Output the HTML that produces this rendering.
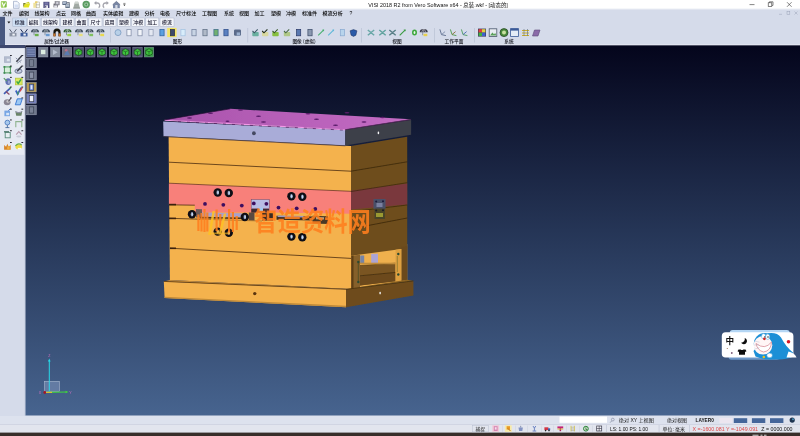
<!DOCTYPE html><html lang="zh"><head><meta charset="utf-8"><title>VISI 2018 R2 from Vero Software x64 - 总装.wkf - [动态的]</title>
<style>html,body{margin:0;padding:0;background:#d5dbea;overflow:hidden}body{width:800px;height:436px;position:relative;font-family:"Liberation Sans", "Noto Sans CJK SC", sans-serif}svg{position:absolute;left:-6px;top:-6px;display:block;filter:blur(0.3px)}text{font-family:"Liberation Sans", "Noto Sans CJK SC", sans-serif}</style></head><body>
<svg width="812" height="448" viewBox="-6 -6 812 448">
<defs>
<linearGradient id="bg" x1="0" y1="0" x2="0" y2="1"><stop offset="0" stop-color="#04051c"/><stop offset="0.5" stop-color="#253556"/><stop offset="1" stop-color="#47648f"/></linearGradient>
<filter id="b1" x="-20%" y="-20%" width="140%" height="140%"><feGaussianBlur stdDeviation="0.45"/></filter>
<filter id="b2" x="-20%" y="-20%" width="140%" height="140%"><feGaussianBlur stdDeviation="0.3"/></filter>
<linearGradient id="mag" x1="0" y1="0" x2="1" y2="0"><stop offset="0" stop-color="#a953ac"/><stop offset="1" stop-color="#c46cc4"/></linearGradient></defs>
<rect x="-6" y="-6" width="812" height="448" fill="#d5dbea"/>
<rect x="-6" y="-6" width="812" height="14.8" fill="#ffffff"/>
<rect x="-6" y="8.8" width="812" height="0.600" fill="#f1f3f9"/><rect x="-6" y="9.400" width="812" height="0.600" fill="#e2e6f1"/>
<rect x="25.2" y="45.3" width="780.8" height="370.4" fill="url(#bg)"/>
<rect x="-6" y="16.8" width="11" height="31.500" fill="#485880"/>
<rect x="5" y="44.300" width="801" height="0.800" fill="#e6e9f3"/>
<rect x="-6" y="415.7" width="812" height="17" fill="#dde2ee"/>
<rect x="-6" y="424" width="812" height="0.7" fill="#c2c8d8"/>
<rect x="-6" y="424.7" width="812" height="8" fill="#e2e5ee"/>
<rect x="-6" y="432.6" width="812" height="9.4" fill="#382e2a"/>
<text x="368.3" y="6.7" font-size="5.60" fill="#111" text-anchor="start" font-weight="normal" textLength="139.5" lengthAdjust="spacingAndGlyphs">VISI 2018 R2 from Vero Software x64 - 总装.wkf - [动态的]</text>
<path d="M749.5 4.6h5" stroke="#333" stroke-width="0.6" fill="none"/>
<rect x="768.2" y="2.8" width="3.6" height="3.6" stroke="#333" stroke-width="0.6" fill="none"/><path d="M769.4 2.8v-1h3.6v3.6h-1" stroke="#333" stroke-width="0.6" fill="none"/>
<path d="M787 2.2l4.6 4.6M791.6 2.2l-4.6 4.6" stroke="#333" stroke-width="0.6" fill="none"/>
<g stroke="#9aa2b8" stroke-width="0.5" fill="none"><path d="M779 14.3h3"/><rect x="787" y="11.5" width="2.8" height="2.8"/><path d="M794.5 11.5l3 3M797.5 11.5l-3 3"/></g>
<g filter="url(#b1)">
<rect x="0.9" y="1.2" width="5.8" height="6.3" rx="0.8" fill="#7cba3c"/><rect x="0.9" y="1.2" width="2.6" height="6.3" rx="0.8" fill="#a4d264"/><path d="M2.1 2.6l1.700 3.600 1.700-3.600" stroke="#fff" stroke-width="1.100" fill="none"/>
<path d="M13.500 1.300h3.600l2 2v5h-5.600z" fill="#f4f7fd" stroke="#8a98b8" stroke-width="0.600"/><path d="M14.600 4.500h3.400v3h-3.400z" fill="#d4def2"/>
<path d="M23.300 7.600l1.500-4h5.400l-1.500 4z" fill="#e2e224"/><path d="M23.300 7.600v-4.600h2l0.600 0.800h-1.100z" fill="#70781e"/><path d="M25.300 3l3.500-1.200 1 1.800" fill="#c8d030"/>
<rect x="33.300" y="2.800" width="3.400" height="5" fill="#f0e29a"/><rect x="36.200" y="2" width="3.400" height="5.800" fill="#fbfbf6" stroke="#a8a48c" stroke-width="0.500"/><rect x="35" y="1.300" width="2.400" height="1.800" fill="#e8d070"/><path d="M36.200 4.800h3.400" stroke="#8a8a7a" stroke-width="0.500"/>
<rect x="43.400" y="1.800" width="6" height="6.200" fill="#4c4c7e"/><rect x="44.500" y="2.300" width="3.800" height="2.400" fill="#7878a8"/><rect x="44.800" y="5.300" width="3.200" height="2.700" fill="#ececf4"/><rect x="45.200" y="5.800" width="1" height="1.800" fill="#3c3c60"/>
<rect x="53.500" y="3.600" width="4.400" height="3.800" fill="#74747e"/><rect x="55" y="1.600" width="4.200" height="3.400" fill="#9c9ca6" stroke="#5a5a64" stroke-width="0.400"/><rect x="54.200" y="5.400" width="3" height="2.400" fill="#e8e8ee"/><rect x="56.200" y="2.300" width="2" height="1.400" fill="#e0e0e8"/>
<rect x="62.400" y="1.400" width="4.600" height="3.600" fill="#52607a"/><rect x="63" y="1.900" width="3.400" height="2.200" fill="#aab8cc"/><rect x="65.400" y="3.600" width="4.400" height="4.400" fill="#667488"/><rect x="66" y="4.300" width="3" height="2.400" fill="#b4c0d0"/><path d="M67 2.600h2.400v1" stroke="#3a4454" stroke-width="0.700" fill="none"/>
<path d="M73.200 8.200l1.800-6.400h3.200l1.800 6.400z" fill="#a2aaa4"/><path d="M75.200 1.800h2.800l0.500 2h-3.800z" fill="#d0d6d0"/><path d="M73.200 8.200h6.800" stroke="#6a726c" stroke-width="0.600"/>
<circle cx="86.200" cy="4.500" r="3.700" fill="#5c9c62"/><circle cx="86.200" cy="4.500" r="2" fill="#9cc8a0"/><circle cx="86.200" cy="4.500" r="0.900" fill="#4a8a50"/>
<path d="M98.600 7.600a2.500 2.500 0 0 0 -1.300-4.600h-1.600" fill="none" stroke="#a2a2aa" stroke-width="1.300"/><path d="M96.300 1l-2.300 2 2.300 2z" fill="#a2a2aa"/>
<path d="M104.200 7.600a2.500 2.500 0 0 1 1.300-4.600h1.600" fill="none" stroke="#a2a2aa" stroke-width="1.300"/><path d="M106.500 1l2.300 2-2.300 2z" fill="#a2a2aa"/>
<path d="M113 4.600l3.400-3 3.400 3v3.600h-6.800z" fill="#7886a4"/><rect x="115.300" y="5" width="2.200" height="3.200" fill="#d4dae6"/><path d="M112.600 4.800l3.800-3.400 3.800 3.400" stroke="#55607c" stroke-width="0.700" fill="none"/>
</g>
<path d="M123.300 3.400h2.200" stroke="#222" stroke-width="0.500"/><path d="M123.200 4.500h2.400l-1.200 1.400z" fill="#222"/>
<text x="2.5" y="15.2" font-size="5.05" fill="#000" text-anchor="start" font-weight="500" >文件</text>
<text x="19.0" y="15.2" font-size="5.05" fill="#000" text-anchor="start" font-weight="500" >编辑</text>
<text x="34.5" y="15.2" font-size="5.05" fill="#000" text-anchor="start" font-weight="500" >线架构</text>
<text x="56.0" y="15.2" font-size="5.05" fill="#000" text-anchor="start" font-weight="500" >点云</text>
<text x="71.0" y="15.2" font-size="5.05" fill="#000" text-anchor="start" font-weight="500" >网格</text>
<text x="86.0" y="15.2" font-size="5.05" fill="#000" text-anchor="start" font-weight="500" >曲面</text>
<text x="103.0" y="15.2" font-size="5.05" fill="#000" text-anchor="start" font-weight="500" >实体编辑</text>
<text x="129.0" y="15.2" font-size="5.05" fill="#000" text-anchor="start" font-weight="500" >建模</text>
<text x="144.5" y="15.2" font-size="5.05" fill="#000" text-anchor="start" font-weight="500" >分析</text>
<text x="160.0" y="15.2" font-size="5.05" fill="#000" text-anchor="start" font-weight="500" >电极</text>
<text x="176.0" y="15.2" font-size="5.05" fill="#000" text-anchor="start" font-weight="500" >尺寸标注</text>
<text x="202.0" y="15.2" font-size="5.05" fill="#000" text-anchor="start" font-weight="500" >工程图</text>
<text x="224.0" y="15.2" font-size="5.05" fill="#000" text-anchor="start" font-weight="500" >系统</text>
<text x="239.0" y="15.2" font-size="5.05" fill="#000" text-anchor="start" font-weight="500" >视图</text>
<text x="254.5" y="15.2" font-size="5.05" fill="#000" text-anchor="start" font-weight="500" >加工</text>
<text x="271.0" y="15.2" font-size="5.05" fill="#000" text-anchor="start" font-weight="500" >塑模</text>
<text x="286.0" y="15.2" font-size="5.05" fill="#000" text-anchor="start" font-weight="500" >冲模</text>
<text x="302.0" y="15.2" font-size="5.05" fill="#000" text-anchor="start" font-weight="500" >标准件</text>
<text x="322.5" y="15.2" font-size="5.05" fill="#000" text-anchor="start" font-weight="500" >模流分析</text>
<text x="349.5" y="15.2" font-size="5.05" fill="#000" text-anchor="start" font-weight="500" >?</text>
<path d="M7.4 21.6h3l-1.500 2z" fill="#111"/>
<rect x="12.8" y="18" width="13.8" height="8.4" fill="#cfe0f5" stroke="#aab3c8" stroke-width="0.5"/>
<text x="19.7" y="23.9" font-size="4.90" fill="#14142a" text-anchor="middle" font-weight="500" >标准</text>
<rect x="27.3" y="18" width="12.7" height="8.4" fill="#f4f6fb" stroke="#aab3c8" stroke-width="0.5"/>
<text x="33.6" y="23.9" font-size="4.90" fill="#14142a" text-anchor="middle" font-weight="500" >编辑</text>
<rect x="41.3" y="18" width="18.2" height="8.4" fill="#f4f6fb" stroke="#aab3c8" stroke-width="0.5"/>
<text x="50.4" y="23.9" font-size="4.90" fill="#14142a" text-anchor="middle" font-weight="500" >线架构</text>
<rect x="60.8" y="18" width="13.2" height="8.4" fill="#f4f6fb" stroke="#aab3c8" stroke-width="0.5"/>
<text x="67.4" y="23.9" font-size="4.90" fill="#14142a" text-anchor="middle" font-weight="500" >建模</text>
<rect x="75.2" y="18" width="12.4" height="8.4" fill="#f4f6fb" stroke="#aab3c8" stroke-width="0.5"/>
<text x="81.4" y="23.9" font-size="4.90" fill="#14142a" text-anchor="middle" font-weight="500" >曲面</text>
<rect x="88.8" y="18" width="13.2" height="8.4" fill="#f4f6fb" stroke="#aab3c8" stroke-width="0.5"/>
<text x="95.4" y="23.9" font-size="4.90" fill="#14142a" text-anchor="middle" font-weight="500" >尺寸</text>
<rect x="103.2" y="18" width="12.8" height="8.4" fill="#f4f6fb" stroke="#aab3c8" stroke-width="0.5"/>
<text x="109.6" y="23.9" font-size="4.90" fill="#14142a" text-anchor="middle" font-weight="500" >应用</text>
<rect x="117.4" y="18" width="13.1" height="8.4" fill="#f4f6fb" stroke="#aab3c8" stroke-width="0.5"/>
<text x="124.0" y="23.9" font-size="4.90" fill="#14142a" text-anchor="middle" font-weight="500" >塑模</text>
<rect x="131.8" y="18" width="12.8" height="8.4" fill="#f4f6fb" stroke="#aab3c8" stroke-width="0.5"/>
<text x="138.2" y="23.9" font-size="4.90" fill="#14142a" text-anchor="middle" font-weight="500" >冲模</text>
<rect x="145.8" y="18" width="13.0" height="8.4" fill="#f4f6fb" stroke="#aab3c8" stroke-width="0.5"/>
<text x="152.3" y="23.9" font-size="4.90" fill="#14142a" text-anchor="middle" font-weight="500" >加工</text>
<rect x="160.0" y="18" width="14.0" height="8.4" fill="#f4f6fb" stroke="#aab3c8" stroke-width="0.5"/>
<text x="167.0" y="23.9" font-size="4.90" fill="#14142a" text-anchor="middle" font-weight="500" >模流</text>
<text x="56.5" y="43.2" font-size="4.70" fill="#101018" text-anchor="middle" font-weight="500" >属性/过滤器</text>
<text x="177.5" y="43.2" font-size="4.70" fill="#101018" text-anchor="middle" font-weight="500" >图形</text>
<text x="304.0" y="43.2" font-size="4.70" fill="#101018" text-anchor="middle" font-weight="500" >图像 (虚拟)</text>
<text x="397.0" y="43.2" font-size="4.70" fill="#101018" text-anchor="middle" font-weight="500" >视图</text>
<text x="454.0" y="43.2" font-size="4.70" fill="#101018" text-anchor="middle" font-weight="500" >工作平面</text>
<text x="509.0" y="43.2" font-size="4.70" fill="#101018" text-anchor="middle" font-weight="500" >系统</text>
<rect x="110.0" y="28" width="0.6" height="14.5" fill="#b4bccf"/>
<rect x="247.5" y="28" width="0.6" height="14.5" fill="#b4bccf"/>
<rect x="361.0" y="28" width="0.6" height="14.5" fill="#b4bccf"/>
<rect x="434.0" y="28" width="0.6" height="14.5" fill="#b4bccf"/>
<rect x="474.0" y="28" width="0.6" height="14.5" fill="#b4bccf"/>
<g filter="url(#b1)">
<rect x="9.5" y="32.8" width="7" height="3.600" fill="#8a92a4"/><path d="M9.6 29.2l2.600 3.600M16.4 29.2l-2.600 3.600" stroke="#5a6274" stroke-width="1"/><rect x="12.4" y="33.6" width="2.400" height="2" fill="#f0f3f8"/>
<rect x="20.5" y="32.8" width="7" height="3.600" fill="#3c5c9c"/><path d="M20.6 29.2l2.600 3.600M27.4 29.2l-2.600 3.600" stroke="#1c2c54" stroke-width="1"/><rect x="23.4" y="33.6" width="2.400" height="2" fill="#f0f3f8"/>
<path d="M31.0 32.2a4 3.2 0 0 1 8 0z" fill="#3a4a5a"/><path d="M33.0 32.0l1.300-2.600M35.0 32.1v-3M37.0 32.0l-1.300-2.600" stroke="#e8ecf2" stroke-width="0.500"/><path d="M34.0 32.2v3" stroke="#596474" stroke-width="0.600"/><rect x="34.8" y="33.8" width="3.800" height="2.400" fill="#6ab04a"/>
<path d="M42.0 32.2a4 3.2 0 0 1 8 0z" fill="#3a4a5a"/><path d="M44.0 32.0l1.300-2.600M46.0 32.1v-3M48.0 32.0l-1.300-2.600" stroke="#e8ecf2" stroke-width="0.500"/><path d="M45.0 32.2v3" stroke="#596474" stroke-width="0.600"/><rect x="45.8" y="33.8" width="3.800" height="2.400" fill="#6a9ad0"/>
<path d="M53.4 36.2v-4a3.600 3.600 0 0 1 7.200 0v4h-2.200v-3.600a1.400 1.400 0 0 0-2.800 0v3.600z" fill="#16120e"/><rect x="53.4" y="33.4" width="2" height="3" fill="#c87830"/><rect x="58.6" y="33.4" width="2" height="3" fill="#c87830"/>
<path d="M63.5 32.2a4 3.2 0 0 1 8 0z" fill="#2c5a2c"/><path d="M65.5 32.0l1.300-2.600M67.5 32.1v-3M69.5 32.0l-1.300-2.600" stroke="#e8ecf2" stroke-width="0.500"/><path d="M66.5 32.2v3" stroke="#596474" stroke-width="0.600"/><rect x="67.3" y="33.8" width="3.800" height="2.400" fill="#9ad040"/>
<path d="M75.0 32.2a4 3.2 0 0 1 8 0z" fill="#3a4a5a"/><path d="M77.0 32.0l1.300-2.600M79.0 32.1v-3M81.0 32.0l-1.300-2.600" stroke="#e8ecf2" stroke-width="0.500"/><path d="M78.0 32.2v3" stroke="#596474" stroke-width="0.600"/><rect x="78.8" y="33.8" width="3.800" height="2.400" fill="#e8e080"/>
<path d="M85.5 32.2a4 3.2 0 0 1 8 0z" fill="#3a4a5a"/><path d="M87.5 32.0l1.300-2.600M89.5 32.1v-3M91.5 32.0l-1.300-2.600" stroke="#e8ecf2" stroke-width="0.500"/><path d="M88.5 32.2v3" stroke="#596474" stroke-width="0.600"/><rect x="89.3" y="33.8" width="3.800" height="2.400" fill="#80c060"/>
<path d="M96.5 32.2a4 3.2 0 0 1 8 0z" fill="#3a4a5a"/><path d="M98.5 32.0l1.300-2.600M100.5 32.1v-3M102.5 32.0l-1.300-2.600" stroke="#e8ecf2" stroke-width="0.500"/><path d="M99.5 32.2v3" stroke="#596474" stroke-width="0.600"/><rect x="100.3" y="33.8" width="3.800" height="2.400" fill="#e8d850"/>
<rect x="167.2" y="27.9" width="9.4" height="9.2" fill="#f3e468"/>
<circle cx="118.0" cy="32.6" r="3" fill="#b8d0e8" stroke="#7a9ac0" stroke-width="0.8"/>
<rect x="126.9" y="29.4" width="4.2" height="6.4" fill="#f2f4fa" stroke="#7a86a0" stroke-width="0.7"/>
<rect x="137.9" y="29.4" width="4.2" height="6.4" fill="#f2f4fa" stroke="#7a86a0" stroke-width="0.7"/>
<rect x="148.9" y="29.4" width="4.2" height="6.4" fill="#e4e8f2" stroke="#8a96b0" stroke-width="0.7"/>
<rect x="159.9" y="29.4" width="4.2" height="6.4" fill="#5aa0e0" stroke="#2a5a98" stroke-width="0.7"/>
<rect x="170.4" y="29.4" width="4.2" height="6.4" fill="#3c4a6c" stroke="#2a3040" stroke-width="0.7"/>
<rect x="180.9" y="29.4" width="4.2" height="6.4" fill="#d8ecfa" stroke="#a0c0e0" stroke-width="0.7"/>
<rect x="191.9" y="29.4" width="4.2" height="6.4" fill="#c8d4e4" stroke="#6a7a98" stroke-width="0.7"/>
<rect x="202.9" y="29.4" width="4.2" height="6.4" fill="#b0bac8" stroke="#5a6a80" stroke-width="0.7"/>
<rect x="213.9" y="29.4" width="4.2" height="6.4" fill="#70b070" stroke="#3a6a8a" stroke-width="0.7"/>
<rect x="223.9" y="29.4" width="4.2" height="6.4" fill="#5a80c0" stroke="#2a4a88" stroke-width="0.7"/>
<rect x="234.0" y="29.4" width="7" height="6.4" rx="1.2" fill="#5a6a8a"/><rect x="236.7" y="32.4" width="3.400" height="3" fill="#9ab0d0"/>
<rect x="252.3" y="32.0" width="6.4" height="4.2" rx="0.8" fill="#6ab0a0"/><path d="M252.5 31.0l1.800 1.800 3.400-3.400" stroke="#3e5a68" stroke-width="1.100" fill="none"/>
<rect x="262.0" y="32.0" width="6.4" height="4.2" rx="0.8" fill="#d8d8a0"/><path d="M262.2 31.0l1.800 1.800 3.400-3.400" stroke="#1e2a1a" stroke-width="1.100" fill="none"/>
<rect x="272.3" y="32.0" width="6.4" height="4.2" rx="0.8" fill="#88c040"/><path d="M272.5 31.0l1.800 1.800 3.400-3.400" stroke="#3a5a2a" stroke-width="1.100" fill="none"/>
<rect x="283.8" y="32.0" width="6.4" height="4.2" rx="0.8" fill="#b0c888"/><path d="M284.0 31.0l1.800 1.800 3.400-3.400" stroke="#4a6a4a" stroke-width="1.100" fill="none"/>
<rect x="296.5" y="29.4" width="4.2" height="6.4" fill="#5a78b0" stroke="#2a3a68" stroke-width="0.7"/>
<rect x="307.9" y="29.4" width="4.2" height="6.4" fill="#8a98b0" stroke="#3a4a68" stroke-width="0.7"/>
<path d="M318.2 35.4l5.600-5.600" stroke="#4ab070" stroke-width="1.100"/><path d="M324.2 29.4l-2.200 0.400 1.800 1.800z" fill="#4ab070"/>
<path d="M328.2 35.4l5.600-5.600" stroke="#60b8d8" stroke-width="1.100"/><path d="M334.2 29.4l-2.200 0.400 1.800 1.800z" fill="#60b8d8"/>
<rect x="340.3" y="29.4" width="4.2" height="6.4" fill="#b8d4ec" stroke="#88a8d0" stroke-width="0.7"/>
<path d="M350.1 30.8l3.400-1.200 3.400 1.200-1 4.400-2.400 1.200-2.400-1.200z" fill="#2a5aa8" stroke="#1a2a58" stroke-width="0.5"/>
<path d="M367.8 30.0l3.2 2.6 3.2-2.600M367.8 35.2l3.2-2.600 3.2 2.600" stroke="#6aa8a8" stroke-width="1.400" fill="none"/>
<path d="M379.3 30.0l3.2 2.6 3.2-2.600M379.3 35.2l3.2-2.600 3.2 2.600" stroke="#62a4a0" stroke-width="1.400" fill="none"/>
<path d="M389.3 30.0l3.2 2.6 3.2-2.600M389.3 35.2l3.2-2.600 3.2 2.600" stroke="#5a8088" stroke-width="1.400" fill="none"/>
<path d="M399.7 35.4l5.600-5.600" stroke="#3a9a40" stroke-width="1.100"/><path d="M405.7 29.4l-2.200 0.400 1.800 1.800z" fill="#3a9a40"/>
<ellipse cx="414.5" cy="32.6" rx="2.500" ry="3" fill="#3ea83e"/><ellipse cx="414.5" cy="32.6" rx="0.900" ry="1.500" fill="#e8f6e8"/>
<path d="M419.7 32.2a4 3.2 0 0 1 8 0z" fill="#3a3a4a"/><path d="M421.7 32.0l1.300-2.600M423.7 32.1v-3M425.7 32.0l-1.300-2.600" stroke="#e8ecf2" stroke-width="0.500"/><path d="M422.7 32.2v3" stroke="#596474" stroke-width="0.600"/><rect x="423.5" y="33.8" width="3.800" height="2.400" fill="#e8d050"/>
<path d="M439.9 29.4l1.600 5.200 4.400 1" stroke="#5a6a8a" stroke-width="0.900" fill="none"/><path d="M441.5 34.6l3.600-3" stroke="#7a8aa8" stroke-width="0.900"/>
<path d="M450.4 29.4l1.600 5.200 4.400 1" stroke="#4a9a4a" stroke-width="0.900" fill="none"/><path d="M452.0 34.6l3.600-3" stroke="#8a6a3a" stroke-width="0.900"/>
<path d="M461.4 29.4l1.600 5.200 4.400 1" stroke="#4a9a5a" stroke-width="0.900" fill="none"/><path d="M463.0 34.6l3.600-3" stroke="#4a6ab0" stroke-width="0.900"/>
<rect x="478" y="28.6" width="8" height="8" fill="#3a3a5a"/><rect x="478.6" y="29.2" width="3.4" height="3.4" fill="#e04040"/><rect x="482" y="29.2" width="3.4" height="3.4" fill="#e0d040"/><rect x="478.6" y="32.6" width="3.4" height="3.4" fill="#40b040"/><rect x="482" y="32.6" width="3.4" height="3.4" fill="#4060d0"/>
<rect x="489.2" y="28.8" width="7.6" height="7.6" fill="#e8ecf2" stroke="#4a566a" stroke-width="0.8"/><path d="M490 35.6l2.4-3 1.6 1.6 1.2-1.2 1.2 2.6z" fill="#58a058"/>
<circle cx="504" cy="32.6" r="4" fill="#4a8a3a" stroke="#2a4a2a" stroke-width="0.8"/><circle cx="504" cy="32.6" r="2" fill="#c8e0a0"/>
<rect x="510.6" y="28.6" width="7.8" height="8" fill="#e4ecf6" stroke="#3a5a98" stroke-width="0.8"/><rect x="510.6" y="28.6" width="7.8" height="2" fill="#3a5a98"/>
<path d="M522 30.5h7M522 33h7M522 35.500h7" stroke="#d0b020" stroke-width="1.1"/><path d="M524 29v7M527.500 29v7" stroke="#6a7a8a" stroke-width="0.7"/>
<path d="M532.500 36l2-6h5.500l-2 6z" fill="#8a6aa8" stroke="#5a4a78" stroke-width="0.6"/>
</g>
<rect x="-6" y="45" width="31.2" height="3.400" fill="#3e486e"/>
<rect x="-6" y="48.3" width="31.2" height="367.4" fill="#d5dbea"/>
<rect x="-6" y="48.3" width="30.6" height="106.500" fill="#e6eaf3"/>
<rect x="24.4" y="48.3" width="0.8" height="367.4" fill="#c9d0e2"/>
<g filter="url(#b1)">
<rect x="4.4" y="56.8" width="6.4" height="5.6" fill="#b4bccf" stroke="#98a2b8" stroke-width="0.5"/><rect x="6.8" y="58.8" width="3" height="2.4" fill="#dfe4ee"/>
<path d="M21.8 55.8l-5.4 6" stroke="#3a3e4a" stroke-width="1.5"/><path d="M15.8 57.9l5 4.5M21.8 59.9l-5 3.500" stroke="#8a92a6" stroke-width="1"/>
<rect x="4.4" y="66.9" width="6" height="6" fill="#d8eedc" stroke="#4e9a5e" stroke-width="1"/>
<rect x="3.5" y="66.0" width="1.8" height="1.8" fill="#3f8a52"/>
<rect x="3.5" y="72.0" width="1.8" height="1.8" fill="#3f8a52"/>
<rect x="9.5" y="66.0" width="1.8" height="1.8" fill="#3f8a52"/>
<rect x="9.5" y="72.0" width="1.8" height="1.8" fill="#3f8a52"/>
<ellipse cx="18.5" cy="71.1" rx="3.6" ry="2.2" fill="#c4cce0" stroke="#66708c" stroke-width="0.9"/><path d="M21.8 66.3l-4.600 5" stroke="#343844" stroke-width="1.400"/>
<ellipse cx="8.2" cy="81.6" rx="2.800" ry="3.400" fill="#6272b4"/><path d="M3.8 78.2l3 3" stroke="#5a9a6a" stroke-width="1.200"/><rect x="7.9" y="80.7" width="2" height="3" fill="#9aa6d0"/>
<rect x="15.5" y="78.2" width="6.600" height="6.600" fill="#dce860" stroke="#b8c83a" stroke-width="0.8"/><path d="M16.6 81.4l1.600 2 2.800-4" stroke="#3aa848" stroke-width="1.500" fill="none"/>
<path d="M4.0 93.9l6-5.600" stroke="#3c5cb4" stroke-width="1.600"/><path d="M5.9 91.4l3.500 3" stroke="#8a4a6a" stroke-width="1.300"/><circle cx="10.2" cy="87.9" r="0.900" fill="#3a9a4a"/>
<path d="M15.8 90.5l1.800 3.600 3.600-6.400" stroke="#3a62c4" stroke-width="1.700" fill="none"/><path d="M20.0 91.4l2.400-4" stroke="#d04848" stroke-width="1.300"/><path d="M18.0 91.4v3" stroke="#48a058" stroke-width="1.300"/>
<ellipse cx="7.2" cy="102.2" rx="3.400" ry="3" fill="#8a8694"/><ellipse cx="8.0" cy="101.4" rx="1.600" ry="1.400" fill="#c8c4c8"/><path d="M8.4 101.3l2.500-3" stroke="#5a5660" stroke-width="1.100"/>
<path d="M15.3 104.8l2-6h5l-2 6z" fill="#9cc8f4" stroke="#3474d0" stroke-width="0.900"/>
<rect x="4.4" y="110.6" width="5.600" height="5.600" fill="#78a6e4"/><rect x="6.2" y="112.8" width="3" height="2.400" fill="#d8e6f8"/><path d="M8.4 110.6l2-2" stroke="#4a70b8" stroke-width="1"/>
<path d="M15.4 111.4q3.400 2.400 6.800 0l-0.800 4.400h-5.200z" fill="#6a8468"/><path d="M15.4 111.4q3.400 2.400 6.800 0" stroke="#8c90a0" stroke-width="1.100" fill="none"/>
<circle cx="7.4" cy="122.6" r="2.400" fill="#a8c8ec" stroke="#4c7cc0" stroke-width="0.900"/><path d="M7.4 125.0v3M5.4 127.6h4" stroke="#5a7aa8" stroke-width="1"/>
<path d="M15.8 127.2v-5.600h6v5.600" stroke="#90b490" stroke-width="1.100" fill="none"/>
<rect x="5.2" y="132.4" width="5" height="5.400" fill="#e8eef2" stroke="#5a8c7c" stroke-width="0.900"/><path d="M4.0 131.8h5" stroke="#4a7868" stroke-width="1.300"/>
<path d="M16.2 134.6l2.600-3 2.800 3" stroke="#b89cae" stroke-width="1.100" fill="none"/><ellipse cx="18.8" cy="136.6" rx="2.600" ry="1" fill="#c8ccd8"/>
<path d="M4.1 149.7h6.600v-4.600l-2 1.600-1.300-3-1.300 3-2-1.600z" fill="#d8862c"/><rect x="7.2" y="146.5" width="2.400" height="3" fill="#f0b040"/>
<ellipse cx="18.8" cy="146.9" rx="3.400" ry="2.400" fill="#ecdc44"/><path d="M15.4 145.9q3-3.600 6.400-0.800" stroke="#68b050" stroke-width="1.200" fill="none"/><rect x="17.8" y="147.9" width="3.600" height="1.600" fill="#fafaf0"/>
<rect x="10.0" y="55.1" width="1.8" height="0.9" fill="#1a1a22"/>
<rect x="21.4" y="55.1" width="1.8" height="0.9" fill="#1a1a22"/>
<rect x="10.0" y="65.6" width="1.8" height="0.9" fill="#1a1a22"/>
<rect x="21.4" y="65.6" width="1.8" height="0.9" fill="#1a1a22"/>
<rect x="10.0" y="76.9" width="1.8" height="0.9" fill="#1a1a22"/>
<rect x="21.4" y="76.9" width="1.8" height="0.9" fill="#1a1a22"/>
<rect x="10.0" y="86.6" width="1.8" height="0.9" fill="#1a1a22"/>
<rect x="21.4" y="86.6" width="1.8" height="0.9" fill="#1a1a22"/>
<rect x="10.0" y="97.5" width="1.8" height="0.9" fill="#1a1a22"/>
<rect x="21.4" y="97.5" width="1.8" height="0.9" fill="#1a1a22"/>
<rect x="10.0" y="108.7" width="1.8" height="0.9" fill="#1a1a22"/>
<rect x="21.4" y="108.7" width="1.8" height="0.9" fill="#1a1a22"/>
<rect x="10.0" y="119.5" width="1.8" height="0.9" fill="#1a1a22"/>
<rect x="21.4" y="119.5" width="1.8" height="0.9" fill="#1a1a22"/>
<rect x="10.0" y="130.3" width="1.8" height="0.9" fill="#1a1a22"/>
<rect x="21.4" y="130.3" width="1.8" height="0.9" fill="#1a1a22"/>
<rect x="10.0" y="142.0" width="1.8" height="0.9" fill="#1a1a22"/>
<rect x="21.4" y="142.0" width="1.8" height="0.9" fill="#1a1a22"/>
</g>
<g filter="url(#b2)">
<rect x="26.4" y="47.2" width="9.400" height="9.800" fill="#5c6a98" stroke="#9aa0b4" stroke-width="0.5"/>
<rect x="38.5" y="47.2" width="9.400" height="9.800" fill="#7c8494" stroke="#9aa0b4" stroke-width="0.5"/>
<rect x="50.5" y="47.2" width="9.400" height="9.800" fill="#868e9e" stroke="#9aa0b4" stroke-width="0.5"/>
<rect x="62.3" y="47.2" width="9.400" height="9.800" fill="#6e6e80" stroke="#9aa0b4" stroke-width="0.5"/>
<rect x="73.9" y="47.2" width="9.400" height="9.800" fill="#4e5270" stroke="#8c92a4" stroke-width="0.5"/>
<path d="M75.3 50.300l3.300-1.600 3.300 1.600v3.800l-3.300 1.700-3.300-1.700z" fill="#3ec43e" stroke="#163a16" stroke-width="0.600"/><path d="M75.3 50.300l3.300 1.500 3.300-1.500M78.6 51.800v4" stroke="#163a16" stroke-width="0.500" fill="none"/>
<rect x="85.6" y="47.2" width="9.400" height="9.800" fill="#4e5270" stroke="#8c92a4" stroke-width="0.5"/>
<path d="M87.0 50.300l3.300-1.600 3.300 1.600v3.800l-3.300 1.700-3.300-1.700z" fill="#3ec43e" stroke="#163a16" stroke-width="0.600"/><path d="M87.0 50.300l3.300 1.500 3.300-1.500M90.3 51.800v4" stroke="#163a16" stroke-width="0.500" fill="none"/>
<rect x="97.3" y="47.2" width="9.400" height="9.800" fill="#4e5270" stroke="#8c92a4" stroke-width="0.5"/>
<path d="M98.7 50.300l3.300-1.600 3.300 1.600v3.800l-3.300 1.700-3.300-1.700z" fill="#3ec43e" stroke="#163a16" stroke-width="0.600"/><path d="M98.7 50.300l3.300 1.500 3.300-1.500M102.0 51.800v4" stroke="#163a16" stroke-width="0.500" fill="none"/>
<rect x="109.3" y="47.2" width="9.400" height="9.800" fill="#4e5270" stroke="#8c92a4" stroke-width="0.5"/>
<path d="M110.7 50.300l3.300-1.600 3.300 1.600v3.800l-3.300 1.700-3.300-1.700z" fill="#3ec43e" stroke="#163a16" stroke-width="0.600"/><path d="M110.7 50.300l3.300 1.500 3.300-1.500M114.0 51.800v4" stroke="#163a16" stroke-width="0.500" fill="none"/>
<rect x="120.8" y="47.2" width="9.400" height="9.800" fill="#4e5270" stroke="#8c92a4" stroke-width="0.5"/>
<path d="M122.2 50.300l3.300-1.600 3.300 1.600v3.800l-3.300 1.700-3.300-1.700z" fill="#3ec43e" stroke="#163a16" stroke-width="0.600"/><path d="M122.2 50.300l3.300 1.500 3.300-1.500M125.5 51.800v4" stroke="#163a16" stroke-width="0.500" fill="none"/>
<rect x="132.8" y="47.2" width="9.400" height="9.800" fill="#4e5270" stroke="#8c92a4" stroke-width="0.5"/>
<path d="M134.2 50.300l3.300-1.600 3.300 1.600v3.800l-3.300 1.700-3.300-1.700z" fill="#3ec43e" stroke="#163a16" stroke-width="0.600"/><path d="M134.2 50.300l3.300 1.500 3.300-1.500M137.5 51.800v4" stroke="#163a16" stroke-width="0.500" fill="none"/>
<rect x="144.3" y="47.2" width="9.400" height="9.800" fill="#3a9a48" stroke="#8c92a4" stroke-width="0.5"/>
<path d="M145.7 50.300l3.300-1.600 3.300 1.600v3.800l-3.300 1.700-3.300-1.700z" fill="#3ec43e" stroke="#163a16" stroke-width="0.600"/><path d="M145.7 50.300l3.300 1.500 3.300-1.500M149.0 51.800v4" stroke="#163a16" stroke-width="0.500" fill="none"/>
<path d="M27.300 49.800h7.600M27.300 52.100h7.600M27.300 54.400h7.600" stroke="#8c98c0" stroke-width="0.8"/>
<rect x="41" y="49.800" width="4.400" height="4.400" fill="#dcece0"/>
<path d="M53 49.400l4.600 2.800-4.600 2.800z" fill="#b4bccc"/>
<path d="M64 55.200l3-6 3 6z" fill="#5a7ab0"/><circle cx="66.200" cy="50.200" r="1.300" fill="#b87088"/>
<rect x="26.700" y="58.2" width="9.600" height="9.600" fill="#70788c" stroke="#9aa0b4" stroke-width="0.5"/>
<rect x="29.300" y="59.9" width="4.400" height="6.200" fill="#8a92a6" stroke="#3a4052" stroke-width="0.700"/>
<path d="M29.300 62.0h4.400M29.300 64.0h4.400" stroke="#3a4052" stroke-width="0.500"/>
<rect x="26.700" y="70.4" width="9.600" height="9.600" fill="#70788c" stroke="#9aa0b4" stroke-width="0.5"/>
<rect x="29.300" y="72.1" width="4.400" height="6.200" fill="#8a92a6" stroke="#3a4052" stroke-width="0.700"/>
<rect x="26.700" y="82.4" width="9.600" height="9.600" fill="#b89c52" stroke="#9aa0b4" stroke-width="0.5"/>
<rect x="29.300" y="84.1" width="4.400" height="6.200" fill="#6e88d8" stroke="#3a4052" stroke-width="0.700"/>
<rect x="30.600" y="85.2" width="1.800" height="4" fill="#dfe6fa"/>
<rect x="26.700" y="93.8" width="9.600" height="9.600" fill="#7882bc" stroke="#9aa0b4" stroke-width="0.5"/>
<rect x="29.300" y="95.5" width="4.400" height="6.200" fill="#eef0f8" stroke="#3a4052" stroke-width="0.700"/>
<rect x="26.700" y="105.2" width="9.600" height="9.600" fill="#70788c" stroke="#9aa0b4" stroke-width="0.5"/>
<rect x="29.300" y="106.9" width="4.400" height="6.200" fill="#7a8296" stroke="#3a4052" stroke-width="0.700"/>
</g>
<g id="model" filter="url(#b2)">
<polygon points="351.0,250.0 407.2,244.0 407.2,281.0 351.0,289.0" fill="#efb04e" />
<polygon points="360.0,265.5 395.5,263.2 395.5,281.3 360.0,285.5" fill="#7a5520" />
<polygon points="360.0,276.0 395.5,272.6 395.5,281.3 360.0,285.5" fill="#6c4a1c" />
<line x1="360.0" y1="275.8" x2="395.5" y2="272.4" stroke="#3e2a0c" stroke-width="0.7"/>
<line x1="360.0" y1="265.5" x2="395.5" y2="263.2" stroke="#4a3210" stroke-width="0.6"/>
<rect x="360.200" y="255.500" width="4" height="7.500" fill="#7484a8"/>
<rect x="371.200" y="253.800" width="6.800" height="9.800" fill="#aca4d4"/>
<rect x="359" y="262.700" width="37" height="1.600" fill="#c08c3a"/>
<polygon points="351.0,146.0 407.2,136.8 407.2,248.2 351.0,255.8" fill="#6e4d1c" />
<polygon points="351.0,190.5 407.2,183.5 407.2,204.6 351.0,209.6" fill="#7a393c" />
<polygon points="401.3,247.0 407.4,246.3 407.4,280.0 401.3,281.0" fill="#6a4a1c" />
<polygon points="395.5,249.8 401.3,249.0 401.3,281.0 395.5,282.0" fill="#dea040" />
<circle cx="398.300" cy="254" r="1.200" fill="#2c4a30"/><circle cx="398.300" cy="274.500" r="1.200" fill="#2c4a30"/>
<line x1="397.3" y1="256.0" x2="397.3" y2="272.0" stroke="#8a7a30" stroke-width="0.8"/>
<polygon points="351.3,255.8 360.0,254.8 360.0,288.2 351.3,289.2" fill="#86602a" />
<polygon points="351.3,255.8 353.5,255.6 353.5,289.0 351.3,289.2" fill="#5c3e14" />
<circle cx="358.300" cy="262" r="1.200" fill="#2c4a30"/><circle cx="358.300" cy="282" r="1.200" fill="#2c4a30"/>
<line x1="358.3" y1="263.0" x2="358.3" y2="281.0" stroke="#4a4a24" stroke-width="0.8"/>
<line x1="351.0" y1="171.2" x2="407.2" y2="161.8" stroke="#3a2608" stroke-width="0.8"/>
<line x1="351.0" y1="191.5" x2="407.2" y2="182.7" stroke="#3a2608" stroke-width="0.7"/>
<line x1="351.0" y1="211.8" x2="407.2" y2="205.0" stroke="#3a2608" stroke-width="0.7"/>
<line x1="351.0" y1="228.8" x2="407.2" y2="218.0" stroke="#3a2608" stroke-width="0.8"/>
<rect x="373.500" y="199" width="12" height="10" fill="#4a5068"/>
<rect x="374.500" y="208.500" width="10.500" height="10.500" fill="#4a4428"/>
<rect x="376.500" y="203" width="6" height="4" fill="#7a80a0"/>
<rect x="376" y="213" width="7" height="4" fill="#9a9a30"/>
<circle cx="376.200" cy="201.500" r="1" fill="#1a1a3a"/><circle cx="383" cy="201.300" r="1" fill="#1a1a3a"/><circle cx="376.200" cy="210.500" r="1" fill="#1a1a2a"/><circle cx="383" cy="210.200" r="1" fill="#1a1a2a"/>
<polygon points="168.6,136.5 351.0,146.0 351.0,289.0 169.9,280.0" fill="#f4b24e" />
<polygon points="168.9,183.2 351.0,191.3 351.0,213.7 271.0,212.5 194.8,212.6 194.8,205.2 168.9,204.8" fill="#f8807a" />
<polygon points="196.0,209.0 202.0,209.2 202.0,217.7 196.0,217.5" fill="#6e5c5a" />
<polygon points="202.0,212.6 242.0,213.2 242.0,217.0 202.0,216.6" fill="#a8a0cc" />
<polygon points="200.0,216.8 242.0,217.4 242.0,219.0 200.0,218.6" fill="#4a3420" />
<polygon points="248.8,212.5 254.5,212.6 254.5,220.5 248.8,220.3" fill="#5a4a40" />
<polygon points="251.2,208.7 269.2,208.7 269.2,212.6 251.2,212.6" fill="#3c2c30" />
<polygon points="262.0,213.0 273.0,213.2 273.0,220.7 262.0,220.5" fill="#3a2a20" />
<polygon points="276.5,215.8 312.5,216.5 312.5,220.5 276.5,219.8" fill="#3e2e22" />
<polygon points="277.6,215.6 303.5,216.1 303.5,217.5 277.6,217.0" fill="#9c98c4" />
<polygon points="312.5,215.8 328.0,216.2 328.0,224.0 312.5,223.5" fill="#4a3826" />
<polygon points="316.0,217.0 324.0,217.2 324.0,219.5 316.0,219.3" fill="#b0a080" />
<rect x="251.200" y="199.700" width="18" height="9" fill="#b8bce4" stroke="#6a4a6a" stroke-width="0.500"/>
<rect x="258.500" y="207.600" width="4.500" height="3.600" fill="#a0c8f0"/>
<circle cx="253.8" cy="203.4" r="1.900" fill="#3c1060"/>
<circle cx="266.4" cy="203.8" r="1.900" fill="#3c1060"/>
<circle cx="205.0" cy="203.9" r="1.900" fill="#3c1060"/>
<circle cx="223.3" cy="204.8" r="1.900" fill="#3c1060"/>
<circle cx="241.8" cy="205.6" r="1.900" fill="#3c1060"/>
<circle cx="278.5" cy="207.6" r="1.900" fill="#3c1060"/>
<circle cx="296.7" cy="208.3" r="1.900" fill="#3c1060"/>
<circle cx="315.3" cy="209.0" r="1.900" fill="#3c1060"/>
<line x1="168.9" y1="162.2" x2="351.0" y2="171.2" stroke="#4a2c10" stroke-width="0.8"/>
<line x1="168.9" y1="183.2" x2="351.0" y2="191.3" stroke="#5a2c20" stroke-width="0.7"/>
<line x1="168.9" y1="204.8" x2="194.8" y2="205.2" stroke="#4a2c10" stroke-width="0.8"/>
<line x1="168.9" y1="218.3" x2="200.0" y2="219.2" stroke="#4a2c10" stroke-width="0.8"/>
<line x1="200.0" y1="219.2" x2="262.0" y2="221.0" stroke="#8a5a20" stroke-width="0.6"/>
<line x1="169.9" y1="248.2" x2="351.0" y2="258.4" stroke="#4a2c10" stroke-width="0.8"/>
<rect x="169" y="203.800" width="7" height="1.600" fill="#3a2010"/><rect x="169" y="217.600" width="7" height="1.600" fill="#3a2010"/><rect x="170" y="247.500" width="6" height="1.600" fill="#3a2010"/>
<circle cx="217.7" cy="192.5" r="4.2" fill="#101014"/>
<ellipse cx="217.7" cy="192.5" rx="1.3" ry="2.2" fill="#7c8cac"/>
<ellipse cx="218.0" cy="192.5" rx="0.8" ry="1.7" fill="#c8d8f0"/>
<circle cx="228.8" cy="193.0" r="4.2" fill="#101014"/>
<ellipse cx="228.8" cy="193.0" rx="1.3" ry="2.2" fill="#7c8cac"/>
<ellipse cx="229.1" cy="193.0" rx="0.8" ry="1.7" fill="#c8d8f0"/>
<circle cx="291.4" cy="196.3" r="4.2" fill="#101014"/>
<ellipse cx="291.4" cy="196.3" rx="1.3" ry="2.2" fill="#7c8cac"/>
<ellipse cx="291.7" cy="196.3" rx="0.8" ry="1.7" fill="#c8d8f0"/>
<circle cx="302.3" cy="196.8" r="4.2" fill="#101014"/>
<ellipse cx="302.3" cy="196.8" rx="1.3" ry="2.2" fill="#7c8cac"/>
<ellipse cx="302.6" cy="196.8" rx="0.8" ry="1.7" fill="#c8d8f0"/>
<circle cx="192.0" cy="214.2" r="4.2" fill="#101014"/>
<ellipse cx="192.0" cy="214.2" rx="1.3" ry="2.2" fill="#7c8cac"/>
<ellipse cx="192.3" cy="214.2" rx="0.8" ry="1.7" fill="#c8d8f0"/>
<circle cx="244.8" cy="217.0" r="4.2" fill="#101014"/>
<ellipse cx="244.8" cy="217.0" rx="1.3" ry="2.2" fill="#7c8cac"/>
<ellipse cx="245.1" cy="217.0" rx="0.8" ry="1.7" fill="#c8d8f0"/>
<circle cx="291.4" cy="236.6" r="4.2" fill="#101014"/>
<ellipse cx="291.4" cy="236.6" rx="1.3" ry="2.2" fill="#7c8cac"/>
<ellipse cx="291.7" cy="236.6" rx="0.8" ry="1.7" fill="#c8d8f0"/>
<circle cx="302.3" cy="237.2" r="4.2" fill="#101014"/>
<ellipse cx="302.3" cy="237.2" rx="1.3" ry="2.2" fill="#7c8cac"/>
<ellipse cx="302.6" cy="237.2" rx="0.8" ry="1.7" fill="#c8d8f0"/>
<circle cx="217.7" cy="231.6" r="4.2" fill="#101014"/>
<ellipse cx="217.7" cy="231.6" rx="1.3" ry="2.2" fill="#c89048"/>
<ellipse cx="218.0" cy="231.6" rx="0.8" ry="1.7" fill="#f0c060"/>
<circle cx="228.8" cy="232.8" r="4.2" fill="#101014"/>
<ellipse cx="228.8" cy="232.8" rx="1.3" ry="2.2" fill="#c89048"/>
<ellipse cx="229.1" cy="232.8" rx="0.8" ry="1.7" fill="#f0c060"/>
<polygon points="163.8,281.4 169.9,280.0 351.0,289.0 346.0,289.3" fill="#c88c38" />
<polygon points="346.0,289.3 351.0,288.3 407.2,279.8 413.4,280.9" fill="#8a6224" />
<polygon points="163.8,281.4 346.0,289.3 346.0,307.3 164.6,298.0" fill="#f4b24e" />
<polygon points="164.6,296.8 346.0,305.8 346.0,307.3 164.6,298.0" fill="#c08a38" />
<polygon points="346.0,289.3 413.4,280.9 413.4,295.4 346.0,307.3" fill="#6e4c1a" />
<line x1="163.8" y1="281.4" x2="346.0" y2="289.3" stroke="#5a3810" stroke-width="0.8"/>
<line x1="346.0" y1="289.3" x2="413.4" y2="280.9" stroke="#3a2608" stroke-width="0.6"/>
<circle cx="254.750" cy="293.600" r="1.700" fill="#5a3410"/>
<ellipse cx="380.100" cy="293.100" rx="0.800" ry="1.300" fill="#f4f4f4"/>
<polygon points="163.2,121.5 345.3,130.0 345.3,145.5 163.5,136.3" fill="#a9acd8" />
<polygon points="345.3,130.0 411.1,120.0 411.1,134.7 345.3,145.5" fill="#3d3f49" />
<polygon points="164.6,120.0 230.3,108.8 410.8,119.2 345.3,129.5" fill="url(#mag)" />
<line x1="164.6" y1="120.3" x2="345.3" y2="129.7" stroke="#f29ae6" stroke-width="1.1"/>
<line x1="345.3" y1="129.7" x2="410.8" y2="119.5" stroke="#5a2a5a" stroke-width="0.8"/>
<line x1="164.6" y1="119.8" x2="230.3" y2="108.8" stroke="#2a1038" stroke-width="0.7"/>
<line x1="163.5" y1="136.6" x2="345.3" y2="145.8" stroke="#3a2c3a" stroke-width="0.7"/>
<circle cx="253.900" cy="133.250" r="1.900" fill="#454a62"/>
<ellipse cx="378.400" cy="132.900" rx="0.800" ry="1.400" fill="#f4f4f4"/>
<ellipse cx="210.5" cy="113.2" rx="2.5" ry="0.800" fill="#5a1c6a"/>
<ellipse cx="189.5" cy="118.0" rx="2.5" ry="0.800" fill="#5a1c6a"/>
<ellipse cx="240.5" cy="110.0" rx="2.5" ry="0.800" fill="#5a1c6a"/>
<ellipse cx="258.5" cy="116.3" rx="2.5" ry="0.800" fill="#5a1c6a"/>
<ellipse cx="227.5" cy="121.3" rx="2.0" ry="0.800" fill="#5a1c6a"/>
<ellipse cx="263.5" cy="122.0" rx="2.5" ry="0.800" fill="#5a1c6a"/>
<ellipse cx="308.0" cy="113.8" rx="2.5" ry="0.800" fill="#5a1c6a"/>
<ellipse cx="316.5" cy="119.3" rx="2.5" ry="0.800" fill="#5a1c6a"/>
<ellipse cx="335.5" cy="125.3" rx="2.5" ry="0.800" fill="#5a1c6a"/>
<ellipse cx="347.0" cy="112.8" rx="2.5" ry="0.800" fill="#5a1c6a"/>
<ellipse cx="364.0" cy="122.0" rx="2.5" ry="0.800" fill="#5a1c6a"/>
<ellipse cx="382.5" cy="117.5" rx="2.5" ry="0.800" fill="#5a1c6a"/>
<line x1="178" y1="121.600" x2="345" y2="130.200" stroke="#4a1a5a" stroke-width="0.700" stroke-dasharray="3 6"/>
</g>
<g opacity="0.88">
<rect x="197.3" y="214.5" width="2.2" height="16.5" fill="#ff7e1e"/>
<rect x="200.4" y="213.0" width="2.2" height="18.5" fill="#ff7e1e"/>
<rect x="203.4" y="209.0" width="2.2" height="23.0" fill="#ff7e1e"/>
<rect x="206.2" y="212.5" width="2.2" height="19.0" fill="#ff7e1e"/>
<rect x="215.5" y="209.5" width="2.2" height="21.5" fill="#ff7e1e"/>
<rect x="219.2" y="214.0" width="2.2" height="14.0" fill="#ff7e1e"/>
<rect x="228.0" y="209.0" width="2.2" height="23.5" fill="#ff7e1e"/>
<rect x="231.8" y="212.0" width="2.2" height="20.0" fill="#ff7e1e"/>
<rect x="235.6" y="216.0" width="2.2" height="14.0" fill="#ff7e1e"/>
<polygon points="208.300,235 210.800,235 215,211 212.500,211" fill="#ffc024"/>
<polygon points="218.500,234.500 221,234.500 226.300,213.500 223.800,213.500" fill="#ffc024"/>
<rect x="208" y="232.500" width="20" height="1.800" fill="#ffc024" opacity="0.7"/>
<text transform="translate(254.3 231.2) scale(1 1.1)" x="0" y="0" font-size="23.300" font-weight="bold" fill="#ff7f1e" textLength="116.500" lengthAdjust="spacing">智造资料网</text>
</g>
<g filter="url(#b2)">
<rect x="44.500" y="381.300" width="14.800" height="10" fill="#6f86ad" fill-opacity="0.750" stroke="#a8b8d0" stroke-width="0.600"/>
<line x1="49.300" y1="391.300" x2="49.300" y2="360" stroke="#28d8e8" stroke-width="1"/><path d="M48 361.500l1.300-3 1.300 3z" fill="#28d8e8"/>
<line x1="46" y1="392.400" x2="67" y2="392" stroke="#40d040" stroke-width="1.200"/><path d="M65.500 390.800l3 1.200-3 1.300z" fill="#40d040"/>
<circle cx="44.800" cy="392.500" r="1.400" fill="#a01828"/><line x1="46" y1="392.500" x2="52" y2="392.400" stroke="#d8c030" stroke-width="1.200"/>
</g>
<text x="48.300" y="357.300" font-size="3.600" fill="#d070c0">Z</text>
<text x="38.800" y="393.800" font-size="3.600" fill="#d070c0">X</text>
<text x="69.300" y="393.800" font-size="3.600" fill="#d070c0">Y</text>
<g filter="url(#b2)">
<rect x="729.700" y="330" width="60" height="6" rx="3" fill="#b4d6f4"/>
<rect x="728.600" y="354.500" width="51" height="5.200" rx="2.600" fill="#7eaee0" opacity="0.75"/>
<rect x="721.800" y="332.300" width="71.600" height="25.200" rx="3.800" fill="#ffffff"/>
<path d="M768 333.300Q777 332 781 337.500Q786 347 793 352.500L792 357Q786 359.800 776 359.300Q765 360.300 755.500 356.500L753.500 351Z" fill="#1c8fd6"/>
<path d="M788.500 351.500q6.500 1.500 8 6h-10z" fill="#ffffff"/>
<circle cx="764.600" cy="343.800" r="10.800" fill="#1c8fd6"/>
<circle cx="763" cy="345.300" r="9.300" fill="#fff6f6"/>
<ellipse cx="763.600" cy="336.300" rx="2.100" ry="2.700" fill="#fff" stroke="#1c8fd6" stroke-width="0.400"/>
<ellipse cx="767.700" cy="336.800" rx="2.100" ry="2.700" fill="#fff" stroke="#1c8fd6" stroke-width="0.400"/>
<circle cx="764.400" cy="338.800" r="1.400" fill="#d02828"/><circle cx="768" cy="337" r="0.700" fill="#111"/><circle cx="764.800" cy="336.800" r="0.600" fill="#111"/>
<path d="M756 343.500q9 7 15.500-1.500q-0.500 9-8 10q-6-1.500-7.500-8.500z" fill="#fff" stroke="#c05060" stroke-width="0.500"/>
<path d="M754.500 341l5 1.200M754 345h5M755 349l4.500-1.500" stroke="#a8b0c8" stroke-width="0.400"/>
<ellipse cx="769.600" cy="355.400" rx="2.800" ry="2.300" fill="#fff" stroke="#1c8fd6" stroke-width="0.500"/>
<circle cx="763.800" cy="357" r="1.300" fill="#e8c020"/>
<circle cx="788.500" cy="341.800" r="1.800" fill="#d81828"/>
<path d="M744.700 338a3.200 3.200 0 1 1-3.600 4.800a3.800 3.800 0 0 0 3.600-4.800z" fill="#111"/>
<path d="M738.500 349.500h2.200q1.300 1 2.600 0h2.200l1 1.800-1.500 0.800v2.600h-6v-2.600l-1.500-0.800z" fill="#111"/>
<circle cx="727.300" cy="348.500" r="0.600" fill="#a07050"/><circle cx="731.800" cy="353" r="0.900" fill="#7a5a78"/>
</g>
<text x="729.700" y="344" font-size="8.600" font-weight="bold" fill="#111" text-anchor="middle">中</text>
<rect x="559.500" y="416.600" width="47.500" height="6.200" fill="#ffffff"/>
<g filter="url(#b2)"><circle cx="612.800" cy="419.600" r="1.400" fill="none" stroke="#7a8298" stroke-width="0.600"/><line x1="611.800" y1="420.800" x2="610.200" y2="422.600" stroke="#7a8298" stroke-width="0.700"/></g>
<text x="618.8" y="422.4" font-size="4.70" fill="#111" text-anchor="start" font-weight="normal" textLength="35.0" lengthAdjust="spacingAndGlyphs">绝对 XY 上视图</text>
<text x="666.9" y="422.4" font-size="4.70" fill="#111" text-anchor="start" font-weight="normal" textLength="20.0" lengthAdjust="spacingAndGlyphs">绝对视图</text>
<text x="695.6" y="422.4" font-size="4.80" fill="#111" text-anchor="start" font-weight="bold" textLength="18.2" lengthAdjust="spacingAndGlyphs">LAYER0</text>
<rect x="719.400" y="417.800" width="13" height="5.400" fill="#ece6f0"/>
<rect x="733.8" y="418.200" width="13.400" height="4.800" fill="#45669a"/>
<rect x="751.9" y="418.200" width="13.400" height="4.800" fill="#45669a"/>
<rect x="770.0" y="418.200" width="13.400" height="4.800" fill="#45669a"/>
<circle cx="792.200" cy="420.100" r="2.600" fill="#1e3450"/><circle cx="793" cy="419.300" r="1" fill="#4890b8"/>
<text x="475.5" y="430.5" font-size="4.70" fill="#111" text-anchor="start" font-weight="normal">捕捉</text>
<rect x="472.500" y="425.300" width="16" height="6.600" fill="none" stroke="#b8bfd0" stroke-width="0.500"/>
<g filter="url(#b1)">
<rect x="492.300" y="425.300" width="6.800" height="6.600" fill="#f2c8d6"/><rect x="504.900" y="425.300" width="6.800" height="6.600" fill="#f8eaa8"/>
<rect x="493.800" y="426.200" width="3.800" height="4.800" fill="#d486b4"/><rect x="494.800" y="427.200" width="1.800" height="2.400" fill="#f6e0ea"/>
<rect x="506.600" y="426.200" width="3.400" height="3.400" fill="#e89a28"/><path d="M508 428.500l2.400 2.400" stroke="#b86a18" stroke-width="1"/>
<path d="M518.500 427.400h4.400l-0.600 3.600h-3.200z" fill="#8494c4"/><path d="M520.700 425.800v1.600" stroke="#5a6a9a" stroke-width="0.700"/>
<path d="M533 426l1.400 2.200 1.400-2.200M534.400 428.200v2.400M532.600 431h3.600" stroke="#3a5ab0" stroke-width="0.700" fill="none"/>
<rect x="544.400" y="427.300" width="4" height="2.800" fill="#d23444"/><rect x="548" y="428.300" width="2.200" height="1.800" fill="#4464b4"/><circle cx="545.600" cy="430.600" r="0.800" fill="#222"/><circle cx="549" cy="430.600" r="0.800" fill="#222"/>
<rect x="557.400" y="426.400" width="5.800" height="2" fill="#c4247a"/><rect x="559.600" y="428" width="1.500" height="3.200" fill="#a8245a"/><rect x="557.400" y="428.600" width="5.800" height="0.900" fill="#e0b438"/>
<path d="M571 425.800v5.600M574.400 425.800v5.600" stroke="#d8c850" stroke-width="0.900"/><path d="M571 427.200h3.400M571 429h3.400M571 430.600h3.400" stroke="#9a9a8a" stroke-width="0.500"/>
<circle cx="585.900" cy="428.700" r="2.400" fill="#c8e8c8" stroke="#1e7a2e" stroke-width="0.900"/><path d="M585.900 427.300v2.200h1.400" stroke="#1a3a1a" stroke-width="0.600" fill="none"/>
<rect x="596.700" y="426" width="5" height="5" fill="#f0f0f4" stroke="#3a3a4a" stroke-width="0.700"/><path d="M599.200 426v5M596.700 428.500h5" stroke="#3a3a4a" stroke-width="0.600"/>
<rect x="502.0" y="425.500" width="0.400" height="6.400" fill="#c4cad8"/>
<rect x="515.0" y="425.500" width="0.400" height="6.400" fill="#c4cad8"/>
<rect x="527.5" y="425.500" width="0.400" height="6.400" fill="#c4cad8"/>
<rect x="541.0" y="425.500" width="0.400" height="6.400" fill="#c4cad8"/>
<rect x="553.5" y="425.500" width="0.400" height="6.400" fill="#c4cad8"/>
<rect x="566.5" y="425.500" width="0.400" height="6.400" fill="#c4cad8"/>
<rect x="579.0" y="425.500" width="0.400" height="6.400" fill="#c4cad8"/>
<rect x="592.5" y="425.500" width="0.400" height="6.400" fill="#c4cad8"/>
</g>
<text x="610.0" y="430.6" font-size="4.80" fill="#111" text-anchor="start" font-weight="normal" textLength="38.0" lengthAdjust="spacingAndGlyphs">LS: 1.00 PS: 1.00</text>
<text x="662.5" y="430.6" font-size="4.70" fill="#111" text-anchor="start" font-weight="normal" textLength="22.5" lengthAdjust="spacingAndGlyphs">单位: 毫米</text>
<text x="692.5" y="430.6" font-size="4.90" fill="#e04848" text-anchor="start" font-weight="normal" textLength="65.6" lengthAdjust="spacingAndGlyphs">X =-1600.081 Y =-1049.091</text>
<text x="761.3" y="430.6" font-size="4.90" fill="#111" text-anchor="start" font-weight="normal" textLength="31.2" lengthAdjust="spacingAndGlyphs">Z = 0000.000</text>
<rect x="606.0" y="425" width="0.500" height="7.200" fill="#b4bbcc"/>
<rect x="658.8" y="425" width="0.500" height="7.200" fill="#b4bbcc"/>
<rect x="689.4" y="425" width="0.500" height="7.200" fill="#b4bbcc"/>
<g fill="#d8d8d8" opacity="0.7"><rect x="752.500" y="434.600" width="6" height="1.400"/><rect x="760.500" y="434.600" width="2" height="1.400"/><rect x="764" y="434.600" width="2.500" height="1.400"/></g>
</svg></body></html>
